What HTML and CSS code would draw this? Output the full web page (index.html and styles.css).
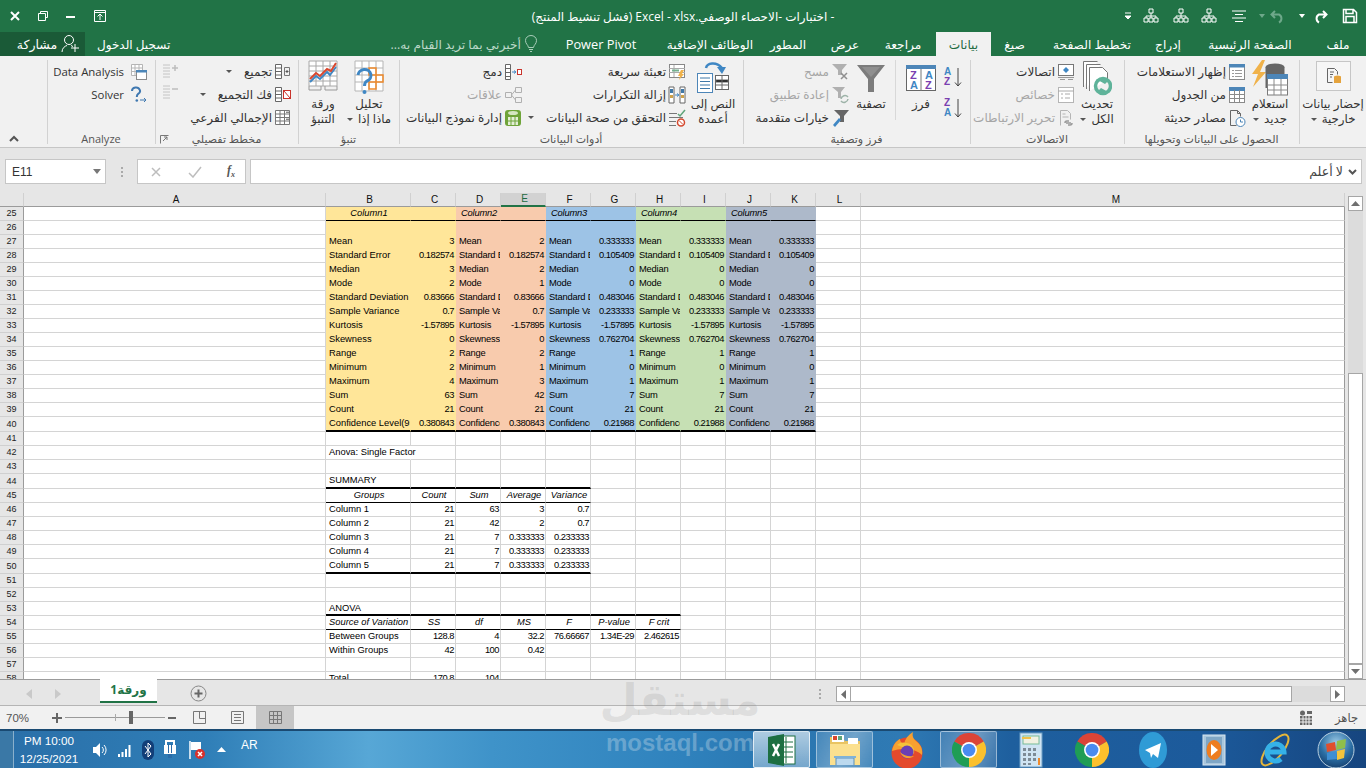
FILE: index.html
```html
<!DOCTYPE html>
<html lang="ar">
<head>
<meta charset="utf-8">
<title>Excel</title>
<link rel="stylesheet" href="styles.css">
</head>
<body>
<div class="app">

<header class="titlebar">
  <div class="winctl">
    <svg width="12" height="12" viewBox="0 0 12 12"><path d="M2 2l8 8M10 2l-8 8" stroke="#fff" stroke-width="2"/></svg>
    <svg width="12" height="12" viewBox="0 0 12 12"><path d="M3.500 3V1.500h7v6H9M1.500 3.500h7v7h-7z" stroke="#fff" fill="none"/></svg>
    <svg width="12" height="12" viewBox="0 0 12 12"><path d="M1 7h9" stroke="#fff" stroke-width="2"/></svg>
    <svg width="14" height="14" viewBox="0 0 14 14"><path d="M1.500 1.500h11v11h-11zM1 3.500h12M7 11V5M4.500 7.500L7 5l2.500 2.500" stroke="#fff" fill="none"/></svg>
  </div>
  <div class="doc-title">- اختبارات -الاحصاء الوصفي.Excel - xlsx (فشل تنشيط المنتج)</div>
  <div class="qat">
    <svg width="6" height="8" viewBox="0 0 6 8"><path d="M0 1h6M0 4l3 3 3-3z" stroke="#fff" fill="#fff"/></svg>
    <svg class="ml12" width="16" height="16" viewBox="0 0 16 16"><path d="M6 1h4v4H6zM1 10h4v4H1zM11 10h4v4h-4zM6 10h4v4H6zM8 5v3M3 10V8h10v2M8 8v2" stroke="#fff" fill="none"/></svg>
    <svg class="ml14" width="16" height="16" viewBox="0 0 16 16"><path d="M6 1h4v4H6zM1 10h4v4H1zM11 10h4v4h-4zM6 10h4v4H6zM8 5v3M3 10V8h10v2M8 8v2" stroke="#fff" fill="none"/></svg>
    <svg class="ml12" width="16" height="16" viewBox="0 0 16 16"><path d="M6 1h4v4H6zM1 10h4v4H1zM11 10h4v4h-4zM6 10h4v4H6zM8 5v3M3 10V8h10v2M8 8v2" stroke="#fff" fill="none"/></svg>
    <svg class="ml14" width="16" height="14" viewBox="0 0 16 14"><path d="M1 2h14M4 5.500h8M1 9h14M4 12.500h8" stroke="#fff"/></svg>
    <svg class="ml12" width="6" height="4" viewBox="0 0 6 4"><path d="M0 0h6L3 4z" fill="#6ea88a"/></svg>
    <svg class="ml5" width="16" height="16" viewBox="0 0 16 16"><path d="M5 3L1.500 6.500 5 10M2 6.500h7a4.500 4.500 0 0 1 0 8" stroke="#6ea88a" stroke-width="2" fill="none"/></svg>
    <svg class="ml13" width="6" height="4" viewBox="0 0 6 4"><path d="M0 0h6L3 4z" fill="#fff"/></svg>
    <svg class="ml7" width="16" height="16" viewBox="0 0 16 16"><path d="M11 3l3.500 3.500L11 10M14 6.500H7a4.500 4.500 0 0 0 0 8" stroke="#fff" stroke-width="2" fill="none"/></svg>
    <svg class="ml14" width="16" height="16" viewBox="0 0 16 16"><path d="M1.500 1.500h10l3 3v10h-13zM4 1.500v4h7v-4M4 14.500v-6h8v6" stroke="#fff" stroke-width="1.500" fill="none"/></svg>
  </div>
</header>

<nav class="tabs">
  <span class="tab t-file">ملف</span>
  <span class="tab t-home">الصفحة الرئيسية</span>
  <span class="tab t-ins">إدراج</span>
  <span class="tab t-page">تخطيط الصفحة</span>
  <span class="tab t-form">صيغ</span>
  <span class="tab t-data active">بيانات</span>
  <span class="tab t-rev">مراجعة</span>
  <span class="tab t-view">عرض</span>
  <span class="tab t-dev">المطور</span>
  <span class="tab t-add">الوظائف الإضافية</span>
  <span class="tab t-pp">Power Pivot</span>
  <span class="tellme">
    <svg width="14" height="18" viewBox="0 0 14 18"><path d="M4.500 12.500C4 9.500 1.500 9 1.500 5.500a5.500 5 0 0 1 11 0C12.500 9 10 9.500 9.500 12.500zM5 14.500h4M6 16.500h2" stroke="#a9cdb9" fill="none"/></svg>
    أخبرني بما تريد القيام به...
  </span>
  <span class="signin">تسجيل الدخول</span>
  <span class="share">
    <svg width="20" height="20" viewBox="0 0 20 20"><circle cx="9" cy="6" r="4.500" stroke="#fff" fill="none"/><path d="M2 18c0-4 3-6 5-6.500M11 11.500l2 1M15 10v8M11 14h8" stroke="#fff" fill="none"/></svg>
    مشاركة
  </span>
</nav>

<section class="ribbon">
  <div class="group g1">
    <div class="g-body">
      <div class="big">
        <div class="big-icon boxed">
          <svg width="18" height="20" viewBox="0 0 18 20"><path d="M3.500 2.500h7l3 3v3M3.500 2.500v14h5M6 6h4M6 8.500h3M6 11h2" stroke="#666" fill="none"/><ellipse cx="13.500" cy="11" rx="3.500" ry="1.500" fill="#e5a33d"/><rect x="10" y="11" width="7" height="6" fill="#e5a33d"/></svg>
        </div>
        <span>إحضار بيانات</span>
        <span>خارجية <i class="car"></i></span>
      </div>
    </div>
    <div class="g-label"></div>
  </div>

  <div class="group g2">
    <div class="g-body">
      <div class="big">
        <div class="big-icon">
          <svg width="38" height="37" viewBox="0 0 38 37"><path d="M11 0L1 14h6L2 27l13-15H9l5-12z" fill="#f0b24a"/><ellipse cx="24" cy="7" rx="9.500" ry="3.500" fill="#666"/><rect x="14.500" y="7" width="19" height="21" fill="#666"/><rect x="16.500" y="15" width="20" height="20" fill="#fff" stroke="#7a7a7a"/><rect x="16" y="14" width="21" height="5" fill="#4d86b8"/><path d="M23 19v16M30 19v16M17 25h20M17 30h20" stroke="#8a8a8a"/></svg>
        </div>
        <span>استعلام</span>
        <span>جديد <i class="car"></i></span>
      </div>
      <div class="list">
        <div class="item"><svg width="18" height="18" viewBox="0 0 18 18"><rect x="1.500" y="1.500" width="15" height="15" fill="#fff" stroke="#8a8a8a"/><rect x="1" y="1" width="16" height="3.500" fill="#4d86b8"/><path d="M4 7.500h2M4 10.500h2M4 13.500h2M7 7.500h7M7 10.500h7M7 13.500h7" stroke="#9a9a9a"/></svg>إظهار الاستعلامات</div>
        <div class="item"><svg width="18" height="18" viewBox="0 0 18 18"><rect x="1.500" y="1.500" width="15" height="15" fill="#fff" stroke="#8a8a8a"/><rect x="1" y="1" width="16" height="4" fill="#4d86b8"/><path d="M1 8.500h16M1 12.500h16M6.500 4v13M11.500 4v13" stroke="#8a8a8a"/></svg>من الجدول</div>
        <div class="item"><svg width="18" height="18" viewBox="0 0 18 18"><path d="M2.500 16.500v-15h7l3 3v3M9.500 1.500v3h3M2.500 16.500h6" stroke="#666" fill="none"/><circle cx="12.500" cy="13" r="4.500" fill="#fff" stroke="#4d86b8"/><path d="M12.500 10.500V13h2.500" stroke="#4d86b8" fill="none"/></svg>مصادر حديثة</div>
      </div>
    </div>
    <div class="g-label">الحصول على البيانات وتحويلها</div>
  </div>

  <div class="group g3">
    <div class="g-body">
      <div class="big">
        <div class="big-icon">
          <svg width="30" height="37" viewBox="0 0 30 37"><path d="M1.500 27V1.500h14M4.500 29V4.500h14M7.500 31V7.500h13l5 5V20" stroke="#777" fill="#fff"/><circle cx="21" cy="26" r="7.500" fill="none" stroke="#5fb39a" stroke-width="3.500"/><path d="M14 19h6v-2l6 4-3 3zM28 33h-6v2l-6-4 3-3z" fill="#5fb39a"/></svg>
        </div>
        <span>تحديث</span>
        <span>الكل <i class="car"></i></span>
      </div>
      <div class="list">
        <div class="item"><svg width="18" height="18" viewBox="0 0 18 18"><rect x="1.500" y="1.500" width="15" height="11" fill="#fff" stroke="#777"/><path d="M9 4l3 3-3 3-3-3z" fill="#3f87c4"/><path d="M1 14.500h16M3 16.500h5M11 16.500h5" stroke="#999"/></svg>اتصالات</div>
        <div class="item off"><svg width="18" height="18" viewBox="0 0 18 18"><rect x="1.500" y="1.500" width="15" height="15" fill="#fff" stroke="#b5b5b5"/><path d="M1 5h16M4 8h2M4 12h2M8 8h5M8 12h5" stroke="#aaa"/></svg>خصائص</div>
        <div class="item off"><svg width="18" height="18" viewBox="0 0 18 18"><path d="M3.500 16.500v-15h7l3 3v6M5.500 5h3M5.500 8h6" stroke="#b5b5b5" fill="none"/><path d="M8 14a2 2 0 0 1 2-2h2M15 14a2 2 0 0 1-2 2h-2M9 14h5" stroke="#999" stroke-width="1.500" fill="none"/></svg>تحرير الارتباطات</div>
      </div>
    </div>
    <div class="g-label">الاتصالات</div>
  </div>

  <div class="group g4">
    <div class="g-body">
      <div class="sort-col">
        <svg width="20" height="22" viewBox="0 0 20 22"><text x="1" y="9" class="sv-a">A</text><text x="1" y="19" class="sv-z">Z</text><path d="M15 2v18M12 16.500l3 3.500 3-3.500" stroke="#444" fill="none"/></svg>
        <svg width="20" height="22" viewBox="0 0 20 22"><text x="1" y="9" class="sv-z">Z</text><text x="1" y="19" class="sv-a">A</text><path d="M15 2v18M12 16.500l3 3.500 3-3.500" stroke="#444" fill="none"/></svg>
      </div>
      <div class="big b-sort">
        <div class="big-icon">
          <svg width="30" height="26" viewBox="0 0 30 26"><rect x=".5" y=".5" width="29" height="25" fill="#fff" stroke="#666"/><rect width="30" height="4" fill="#4d86b8"/><path d="M15 4v22" stroke="#777"/><text x="4" y="14" class="sv-bz">Z</text><text x="4" y="24" class="sv-ba">A</text><text x="19" y="14" class="sv-ba">A</text><text x="19" y="24" class="sv-bz">Z</text></svg>
        </div>
        <span>فرز</span>
      </div>
      <div class="big b-filter">
        <div class="big-icon">
          <svg width="28" height="27" viewBox="0 0 28 27"><path d="M0 0h28L17 14v13h-6V14z" fill="#7c7c7c"/><path d="M5 2h18l-9 10z" fill="#8f8f8f"/></svg>
        </div>
        <span>تصفية</span>
      </div>
      <div class="list">
        <div class="item off"><svg width="18" height="18" viewBox="0 0 18 18"><path d="M1 1h15l-5 6v5H7V7z" fill="#b0b0b0"/><path d="M10 10l6 6M16 10l-6 6" stroke="#8f8f8f" stroke-width="1.500"/></svg>مسح</div>
        <div class="item off"><svg width="18" height="18" viewBox="0 0 18 18"><path d="M1 1h13l-4 5v6H7V6z" fill="#b0b0b0"/><path d="M10 13a4 4 0 0 1 7-2M17 13a4 4 0 0 1-7 2" stroke="#9db3a8" stroke-width="1.500" fill="none"/></svg>إعادة تطبيق</div>
        <div class="item"><svg width="18" height="18" viewBox="0 0 18 18"><path d="M3 1h15l-5 6v6h-4V7z" fill="#666"/><path d="M2 16l6-7 2 2-6 7z" fill="#3f87c4"/></svg>خيارات متقدمة</div>
      </div>
    </div>
    <div class="g-label">فرز وتصفية</div>
  </div>

  <div class="group g5">
    <div class="g-body">
      <div class="big">
        <div class="big-icon">
          <svg width="34" height="34" viewBox="0 0 34 34"><path d="M10 8c1-5 10-7 16 0" stroke="#3f87c4" stroke-width="2.500" fill="none"/><path d="M21 7h9l-4 7z" fill="#3f87c4"/><rect x="1.500" y="13.500" width="15" height="19" fill="#fff" stroke="#4d86b8"/><path d="M4 18h10M4 21.500h10M4 25h10M4 28.500h10" stroke="#3f78a8"/><rect x="19.500" y="15.500" width="13" height="14" fill="#fff" stroke="#666"/><path d="M20 20h12v2H20zM20 25h12" stroke="#666"/><path d="M26 16v13" stroke="#666"/></svg>
        </div>
        <span>النص إلى</span>
        <span>أعمدة</span>
      </div>
      <div class="list l-fixed">
        <div class="item"><svg width="18" height="18" viewBox="0 0 18 18"><rect x="1.500" y="1.500" width="15" height="13" fill="#fff" stroke="#888"/><path d="M1 5.500h16M1 9.500h16M6 2v12" stroke="#aaa"/><path d="M4 7.500h7" stroke="#74b08f" stroke-width="2"/><path d="M13 7l-3 6h2l-1 4 5-6h-2l2-4z" fill="#f0b24a"/></svg>تعبئة سريعة</div>
        <div class="item"><svg width="18" height="18" viewBox="0 0 18 18"><path d="M1 1h5v16H1zM12 1h5v16h-5z" fill="#fff" stroke="#666"/><path d="M2 3h3v4H2zM13 3h3v4h-3z" fill="#3f78a8"/><path d="M2 9h3v3H2zM13 9h3v3h-3z" fill="#cfa24a"/><path d="M7 9h3M9 7.500L11 9l-2 1.500" stroke="#3f87c4" fill="none"/></svg>إزالة التكرارات</div>
        <div class="item"><svg width="18" height="18" viewBox="0 0 18 18"><path d="M1 4.500h8M1 8.500h14M1 12.500h7M1 16.500h7" stroke="#777"/><path d="M10 5l2 2 5-6" stroke="#5fa57a" stroke-width="1.500" fill="none"/><circle cx="13" cy="13.500" r="3.500" fill="#fff" stroke="#d4492f" stroke-width="1.500"/><path d="M11 11.500l4 4" stroke="#d4492f"/></svg>التحقق من صحة البيانات <i class="car m10"></i></div>
      </div>
      <div class="list">
        <div class="item"><svg width="18" height="18" viewBox="0 0 18 18"><path d="M1.500 1.500h5v15h-5zM1.500 5.500h5M1.500 9.500h5M1.500 13.500h5" stroke="#666" fill="#fff"/><path d="M8 9h3" stroke="#3f87c4"/><path d="M10 7.500L12 9l-2 1.500" fill="none" stroke="#3f87c4"/><rect x="13.500" y="6.500" width="4" height="5" fill="#fff" stroke="#c9342c"/></svg>دمج</div>
        <div class="item off"><svg width="18" height="18" viewBox="0 0 18 18"><path d="M1.500 6.500h6v5h-6zM11.500 1.500h6v5h-6zM11.500 11.500h6v5h-6zM7.500 9l4-5M7.500 9l4 5" stroke="#b0b0b0" fill="none"/></svg>علاقات</div>
        <div class="item"><svg width="18" height="18" viewBox="0 0 18 18"><rect x="1" y="1" width="16" height="16" rx="3" fill="#6fa43a"/><ellipse cx="9" cy="4" rx="5" ry="2" fill="#d5e6c2"/><path d="M4 8h10v8H4z" fill="#e3efd6"/><path d="M7 8v8M11 8v8M4 12h10" stroke="#6fa43a"/></svg>إدارة نموذج البيانات</div>
      </div>
    </div>
    <div class="g-label">أدوات البيانات</div>
  </div>

  <div class="group g6">
    <div class="g-body">
      <div class="big b-46">
        <div class="big-icon">
          <svg width="30" height="36" viewBox="0 0 30 36"><path d="M1 1h28v30H1zM1 8h28M1 15h28M1 22h28M8 1v30M15 1v30M22 1v30" fill="#fff" stroke="#b5b5b5"/><path d="M15 8h7v7h-7zM22 15h7v7h-7zM15 22h7v7h-7z" fill="none" stroke="#ee8a2c" stroke-width="1.500"/><path d="M4 15a6.500 6 0 1 1 9 6c-2 1-2.500 2-2.500 5" stroke="#3f87c4" stroke-width="3" fill="none"/><circle cx="10.500" cy="32" r="2" fill="#3f87c4"/></svg>
        </div>
        <span>تحليل</span>
        <span>ماذا إذا <i class="car"></i></span>
      </div>
      <div class="big b-46">
        <div class="big-icon">
          <svg width="30" height="33" viewBox="0 0 30 33"><path d="M1 1h28v25H1zM1 6h28M1 11h28M1 16h28M1 21h28M8 1v25M15 1v25M22 1v25" fill="#fff" stroke="#a8a8a8"/><path d="M2 22l6-6 4 3 7-7 3 3 6-8" stroke="#3f87c4" stroke-width="2" fill="none"/><path d="M2 19l6-6 4 3 7-7 4 2 5-8" stroke="#d9472f" stroke-width="2" fill="none"/><path d="M1 26v4h12v-4M17 26v4h12v-4" stroke="#999" fill="none"/></svg>
        </div>
        <span>ورقة</span>
        <span>التنبؤ</span>
      </div>
    </div>
    <div class="g-label">تنبؤ</div>
  </div>

  <div class="group g7">
    <div class="g-body between">
      <div class="list">
        <div class="item"><svg width="17" height="17" viewBox="0 0 17 17"><path d="M1.500 1.500h6v14h-6zM1.500 5h6M1.500 8.500h6M1.500 12h6" stroke="#666" fill="#fff"/><path d="M10.500 4.500h5v8h-5z" fill="none" stroke="#777"/><path d="M11.500 8.500h3M13 7v3" stroke="#555"/></svg>تجميع <i class="car m10"></i></div>
        <div class="item"><svg width="17" height="17" viewBox="0 0 17 17"><path d="M1.500 1.500h6v14h-6zM1.500 5h6M1.500 8.500h6M1.500 12h6" stroke="#666" fill="#fff"/><rect x="9.500" y="4.500" width="7" height="8" fill="#fff" stroke="#c9342c"/><path d="M10 5l6 7" stroke="#c9342c"/></svg>فك التجميع <i class="car m10"></i></div>
        <div class="item"><svg width="17" height="17" viewBox="0 0 17 17"><path d="M1.500 1.500h14v14h-14zM1.500 5h14M1.500 8.500h14M1.500 12h14M6 1.500v14M10.500 1.500v14" stroke="#777" fill="#fff"/><path d="M12 3.200h3M12 10.200h3" stroke="#555"/></svg>الإجمالي الفرعي</div>
      </div>
      <div class="outline-gray">
        <svg width="18" height="16" viewBox="0 0 18 16"><path d="M1 2h7M1 5h7M1 8h7M1 11h7M1 14h7" stroke="#c4c4c4"/><path d="M10 5h6M13 2v6" stroke="#bdbdbd" stroke-width="1.500"/></svg>
        <svg width="18" height="16" viewBox="0 0 18 16"><path d="M1 2h7M1 5h7M1 8h7M1 11h7M1 14h7" stroke="#c4c4c4"/><path d="M10 5h6" stroke="#bdbdbd" stroke-width="1.500"/></svg>
      </div>
    </div>
    <div class="g-label">مخطط تفصيلي
      <svg class="launcher" width="9" height="9" viewBox="0 0 9 9"><path d="M.5 8.500v-8h8M3 6l4-4M4 2h3v3" stroke="#777" fill="none"/></svg>
    </div>
  </div>

  <div class="group g8">
    <div class="g-body">
      <div class="list">
        <div class="item gap6"><svg width="17" height="17" viewBox="0 0 17 17"><path d="M1.500 1.500h11v11h-11zM1.500 5h11M1.500 8.500h11M5 1.500v11M9 1.500v11" stroke="#b5b5b5" fill="#fff"/><rect x="6.500" y="7.500" width="10" height="9" fill="#fff" stroke="#8a8a8a"/><rect x="6" y="7" width="11" height="2.500" fill="#4d86b8"/></svg>Data Analysis</div>
        <div class="item gap6"><svg width="17" height="17" viewBox="0 0 17 17"><path d="M2 5a4 3.500 0 1 1 6 3c-1 .8-1.200 1.500-1.200 3" stroke="#3f78b0" stroke-width="2" fill="none"/><circle cx="6.800" cy="14.500" r="1.300" fill="#3f78b0"/><path d="M10 14h6M14 12l2 2-2 2" stroke="#3f78b0" fill="none"/></svg>Solver</div>
      </div>
    </div>
    <div class="g-label">Analyze</div>
  </div>

  <div class="group g9">
    <div class="g-body"></div>
    <div class="g-label"><svg class="collapse" width="10" height="7" viewBox="0 0 10 7"><path d="M1 6l4-4 4 4" stroke="#555" stroke-width="2" fill="none"/></svg></div>
  </div>
</section>

<section class="formula">
  <div class="namebox">E11 <svg width="8" height="5" viewBox="0 0 8 5"><path d="M0 0h8L4 5z" fill="#777"/></svg></div>
  <div class="fdots"><i></i><i></i><i></i></div>
  <div class="fbtns">
    <svg width="12" height="12" viewBox="0 0 12 12"><path d="M2 2l8 8M10 2l-8 8" stroke="#bdbdbd" stroke-width="1.500"/></svg>
    <svg width="14" height="12" viewBox="0 0 14 12"><path d="M1 7l4 4 8-10" stroke="#bdbdbd" stroke-width="1.500" fill="none"/></svg>
    <span class="fx">f<sub>x</sub></span>
  </div>
  <div class="finput">
    <svg width="9" height="6" viewBox="0 0 9 6"><path d="M1 1l3.500 3.500L8 1" stroke="#555" stroke-width="2" fill="none"/></svg>
    <span>لا أعلم</span>
  </div>
</section>

<section class="sheet">
  <div class="grid-wrap">
    <table class="cells">
      <colgroup><col class="c-rh"><col class="c-a"><col class="c-b"><col class="c-n"><col class="c-n"><col class="c-n"><col class="c-n"><col class="c-n"><col class="c-n"><col class="c-n"><col class="c-n"><col class="c-n"><col class="c-n"><col class="c-m"></colgroup>
      <thead><tr><th></th><th>A</th><th>B</th><th>C</th><th>D</th><th class="sel">E</th><th>F</th><th>G</th><th>H</th><th>I</th><th>J</th><th>K</th><th>L</th><th class="h-m">M</th></tr></thead>
      <tbody>
<tr><th>25</th><td></td><td class="y tn it">Column1</td><td class="y tn"></td><td class="o tn it">Column2</td><td class="o tn"></td><td class="b tn it">Column3</td><td class="b tn"></td><td class="g tn it">Column4</td><td class="g tn"></td><td class="s tn it">Column5</td><td class="s tn"></td><td></td><td></td></tr>
<tr><th>26</th><td></td><td class="y"></td><td class="y"></td><td class="o"></td><td class="o"></td><td class="b"></td><td class="b"></td><td class="g"></td><td class="g"></td><td class="s"></td><td class="s"></td><td></td><td></td></tr>
<tr><th>27</th><td></td><td class="y">Mean</td><td class="y n">3</td><td class="o">Mean</td><td class="o n">2</td><td class="b">Mean</td><td class="b n">0.333333</td><td class="g">Mean</td><td class="g n">0.333333</td><td class="s">Mean</td><td class="s n">0.333333</td><td></td><td></td></tr>
<tr><th>28</th><td></td><td class="y">Standard Error</td><td class="y n">0.182574</td><td class="o">Standard Error</td><td class="o n">0.182574</td><td class="b">Standard Error</td><td class="b n">0.105409</td><td class="g">Standard Error</td><td class="g n">0.105409</td><td class="s">Standard Error</td><td class="s n">0.105409</td><td></td><td></td></tr>
<tr><th>29</th><td></td><td class="y">Median</td><td class="y n">3</td><td class="o">Median</td><td class="o n">2</td><td class="b">Median</td><td class="b n">0</td><td class="g">Median</td><td class="g n">0</td><td class="s">Median</td><td class="s n">0</td><td></td><td></td></tr>
<tr><th>30</th><td></td><td class="y">Mode</td><td class="y n">2</td><td class="o">Mode</td><td class="o n">1</td><td class="b">Mode</td><td class="b n">0</td><td class="g">Mode</td><td class="g n">0</td><td class="s">Mode</td><td class="s n">0</td><td></td><td></td></tr>
<tr><th>31</th><td></td><td class="y">Standard Deviation</td><td class="y n">0.83666</td><td class="o">Standard Deviation</td><td class="o n">0.83666</td><td class="b">Standard Deviation</td><td class="b n">0.483046</td><td class="g">Standard Deviation</td><td class="g n">0.483046</td><td class="s">Standard Deviation</td><td class="s n">0.483046</td><td></td><td></td></tr>
<tr><th>32</th><td></td><td class="y">Sample Variance</td><td class="y n">0.7</td><td class="o">Sample Variance</td><td class="o n">0.7</td><td class="b">Sample Variance</td><td class="b n">0.233333</td><td class="g">Sample Variance</td><td class="g n">0.233333</td><td class="s">Sample Variance</td><td class="s n">0.233333</td><td></td><td></td></tr>
<tr><th>33</th><td></td><td class="y">Kurtosis</td><td class="y n">-1.57895</td><td class="o">Kurtosis</td><td class="o n">-1.57895</td><td class="b">Kurtosis</td><td class="b n">-1.57895</td><td class="g">Kurtosis</td><td class="g n">-1.57895</td><td class="s">Kurtosis</td><td class="s n">-1.57895</td><td></td><td></td></tr>
<tr><th>34</th><td></td><td class="y">Skewness</td><td class="y n">0</td><td class="o">Skewness</td><td class="o n">0</td><td class="b">Skewness</td><td class="b n">0.762704</td><td class="g">Skewness</td><td class="g n">0.762704</td><td class="s">Skewness</td><td class="s n">0.762704</td><td></td><td></td></tr>
<tr><th>35</th><td></td><td class="y">Range</td><td class="y n">2</td><td class="o">Range</td><td class="o n">2</td><td class="b">Range</td><td class="b n">1</td><td class="g">Range</td><td class="g n">1</td><td class="s">Range</td><td class="s n">1</td><td></td><td></td></tr>
<tr><th>36</th><td></td><td class="y">Minimum</td><td class="y n">2</td><td class="o">Minimum</td><td class="o n">1</td><td class="b">Minimum</td><td class="b n">0</td><td class="g">Minimum</td><td class="g n">0</td><td class="s">Minimum</td><td class="s n">0</td><td></td><td></td></tr>
<tr><th>37</th><td></td><td class="y">Maximum</td><td class="y n">4</td><td class="o">Maximum</td><td class="o n">3</td><td class="b">Maximum</td><td class="b n">1</td><td class="g">Maximum</td><td class="g n">1</td><td class="s">Maximum</td><td class="s n">1</td><td></td><td></td></tr>
<tr><th>38</th><td></td><td class="y">Sum</td><td class="y n">63</td><td class="o">Sum</td><td class="o n">42</td><td class="b">Sum</td><td class="b n">7</td><td class="g">Sum</td><td class="g n">7</td><td class="s">Sum</td><td class="s n">7</td><td></td><td></td></tr>
<tr><th>39</th><td></td><td class="y">Count</td><td class="y n">21</td><td class="o">Count</td><td class="o n">21</td><td class="b">Count</td><td class="b n">21</td><td class="g">Count</td><td class="g n">21</td><td class="s">Count</td><td class="s n">21</td><td></td><td></td></tr>
<tr class="tall"><th>40</th><td></td><td class="y tb">Confidence Level(95.0%)</td><td class="y n tb">0.380843</td><td class="o tb">Confidence Level(95.0%)</td><td class="o n tb">0.380843</td><td class="b tb">Confidence Level(95.0%)</td><td class="b n tb">0.21988</td><td class="g tb">Confidence Level(95.0%)</td><td class="g n tb">0.21988</td><td class="s tb">Confidence Level(95.0%)</td><td class="s n tb">0.21988</td><td></td><td></td></tr>
<tr><th>41</th><td></td><td></td><td></td><td></td><td></td><td></td><td></td><td></td><td></td><td></td><td></td><td></td><td></td></tr>
<tr><th>42</th><td></td><td class="spill">Anova: Single Factor</td><td></td><td></td><td></td><td></td><td></td><td></td><td></td><td></td><td></td><td></td><td></td></tr>
<tr><th>43</th><td></td><td></td><td></td><td></td><td></td><td></td><td></td><td></td><td></td><td></td><td></td><td></td><td></td></tr>
<tr><th>44</th><td></td><td class="tb">SUMMARY</td><td class="tb"></td><td class="tb"></td><td class="tb"></td><td class="tb"></td><td></td><td></td><td></td><td></td><td></td><td></td><td></td></tr>
<tr><th>45</th><td></td><td class="tn it">Groups</td><td class="tn it">Count</td><td class="tn it">Sum</td><td class="tn it">Average</td><td class="tn it">Variance</td><td></td><td></td><td></td><td></td><td></td><td></td><td></td></tr>
<tr><th>46</th><td></td><td>Column 1</td><td class="n">21</td><td class="n">63</td><td class="n">3</td><td class="n">0.7</td><td></td><td></td><td></td><td></td><td></td><td></td><td></td></tr>
<tr><th>47</th><td></td><td>Column 2</td><td class="n">21</td><td class="n">42</td><td class="n">2</td><td class="n">0.7</td><td></td><td></td><td></td><td></td><td></td><td></td><td></td></tr>
<tr><th>48</th><td></td><td>Column 3</td><td class="n">21</td><td class="n">7</td><td class="n">0.333333</td><td class="n">0.233333</td><td></td><td></td><td></td><td></td><td></td><td></td><td></td></tr>
<tr><th>49</th><td></td><td>Column 4</td><td class="n">21</td><td class="n">7</td><td class="n">0.333333</td><td class="n">0.233333</td><td></td><td></td><td></td><td></td><td></td><td></td><td></td></tr>
<tr class="tall"><th>50</th><td></td><td class="tb">Column 5</td><td class="n tb">21</td><td class="n tb">7</td><td class="n tb">0.333333</td><td class="n tb">0.233333</td><td></td><td></td><td></td><td></td><td></td><td></td><td></td></tr>
<tr><th>51</th><td></td><td></td><td></td><td></td><td></td><td></td><td></td><td></td><td></td><td></td><td></td><td></td><td></td></tr>
<tr><th>52</th><td></td><td></td><td></td><td></td><td></td><td></td><td></td><td></td><td></td><td></td><td></td><td></td><td></td></tr>
<tr class="snug"><th>53</th><td></td><td class="tb">ANOVA</td><td class="tb"></td><td class="tb"></td><td class="tb"></td><td class="tb"></td><td class="tb"></td><td class="tb"></td><td></td><td></td><td></td><td></td><td></td></tr>
<tr><th>54</th><td></td><td class="tn il">Source of Variation</td><td class="tn it">SS</td><td class="tn it">df</td><td class="tn it">MS</td><td class="tn it">F</td><td class="tn it">P-value</td><td class="tn it">F crit</td><td></td><td></td><td></td><td></td><td></td></tr>
<tr><th>55</th><td></td><td>Between Groups</td><td class="n">128.8</td><td class="n">4</td><td class="n">32.2</td><td class="n">76.66667</td><td class="n">1.34E-29</td><td class="n">2.462615</td><td></td><td></td><td></td><td></td><td></td></tr>
<tr><th>56</th><td></td><td>Within Groups</td><td class="n">42</td><td class="n">100</td><td class="n">0.42</td><td></td><td></td><td></td><td></td><td></td><td></td><td></td><td></td></tr>
<tr><th>57</th><td></td><td></td><td></td><td></td><td></td><td></td><td></td><td></td><td></td><td></td><td></td><td></td><td></td></tr>
<tr><th>58</th><td></td><td>Total</td><td class="n">170.8</td><td class="n">104</td><td></td><td></td><td></td><td></td><td></td><td></td><td></td><td></td><td></td></tr>
      </tbody>
    </table>
  </div>
  <div class="vscroll">
    <div class="sb-btn"><svg width="9" height="5" viewBox="0 0 9 5"><path d="M0 5h9L4.500 0z" fill="#6f6f6f"/></svg></div>
    <div class="sb-track"></div>
    <div class="sb-thumb"></div>
    <div class="sb-btn"><svg width="9" height="5" viewBox="0 0 9 5"><path d="M0 0h9L4.500 5z" fill="#6f6f6f"/></svg></div>
  </div>
</section>

<section class="sheetbar">
  <div class="snav">
    <svg width="6" height="10" viewBox="0 0 6 10"><path d="M6 0v10L0 5z" fill="#c9c9c9"/></svg>
    <svg width="6" height="10" viewBox="0 0 6 10"><path d="M0 0v10l6-5z" fill="#c9c9c9"/></svg>
  </div>
  <div class="stab">ورقة1</div>
  <svg class="splus" width="17" height="17" viewBox="0 0 17 17"><circle cx="8.500" cy="8.500" r="7.500" fill="none" stroke="#888"/><path d="M4.500 8.500h8M8.500 4.500v8" stroke="#666" stroke-width="2"/></svg>
  <div class="hdots"><i></i><i></i><i></i></div>
  <div class="hscroll">
    <div class="hb"><svg width="5" height="9" viewBox="0 0 5 9"><path d="M5 0v9L0 4.500z" fill="#6f6f6f"/></svg></div>
    <div class="hthumb"></div>
    <div class="htrack"></div>
    <div class="hb"><svg width="5" height="9" viewBox="0 0 5 9"><path d="M0 0v9l5-4.500z" fill="#6f6f6f"/></svg></div>
  </div>
</section>

<footer class="status">
  <span class="zoomv">70%</span>
  <div class="slider">
    <svg width="10" height="10" viewBox="0 0 10 10"><path d="M0 5h10M5 0v10" stroke="#666" stroke-width="2"/></svg>
    <div class="strack"><i class="tick"></i><i class="knob"></i></div>
    <svg width="8" height="10" viewBox="0 0 8 10"><path d="M0 5h8" stroke="#666" stroke-width="2"/></svg>
  </div>
  <div class="views">
    <div class="v"><svg width="15" height="15" viewBox="0 0 15 15"><path d="M1.500 1.500h12v12h-12zM7.500 1.500v7h6" stroke="#777" fill="none"/></svg></div>
    <div class="v"><svg width="15" height="15" viewBox="0 0 15 15"><path d="M1.500 1.500h12v12h-12zM4 4.500h7M4 7.500h7M4 10.500h7" stroke="#777" fill="none"/></svg></div>
    <div class="v on"><svg width="15" height="15" viewBox="0 0 15 15"><path d="M1.500 1.500h12v12h-12zM1.500 5.500h12M1.500 9.500h12M5.500 1.500v12M9.500 1.500v12" stroke="#777" fill="none"/></svg></div>
  </div>
  <div class="status-r">
    <svg width="14" height="16" viewBox="0 0 14 16"><rect x="1" y="6" width="12" height="9" fill="#666"/><path d="M1 9h12M1 12h12M4 6v9M7 6v9M10 6v9" stroke="#f1f1f1"/><circle cx="3.500" cy="3" r="2.500" fill="#666"/><rect x="8" y="1" width="5" height="3" fill="#666"/></svg>
    <span>جاهز</span>
  </div>
</footer>

<footer class="taskbar">
  <div class="show-desk"></div>
  <div class="clock"><span>PM 10:00</span><span>12/25/2021</span></div>
  <div class="tray">
    <svg width="16" height="16" viewBox="0 0 16 16"><path d="M1 5h3l4-4v14l-4-4H1z" fill="#fff"/><path d="M10 5a4 4 0 0 1 0 6M12 3a7 7 0 0 1 0 10" stroke="#fff" fill="none"/></svg>
    <svg width="16" height="15" viewBox="0 0 16 15"><path d="M1 12h2v3H1zM4.500 10h2v5h-2zM8 7h2v8H8zM11.500 3h2v12h-2z" fill="#fff"/></svg>
    <svg width="12" height="20" viewBox="0 0 12 20"><rect width="12" height="20" rx="6" fill="#123e78"/><path d="M3 6l6 8-3 3V3l3 3-6 8" stroke="#fff" fill="none"/></svg>
    <svg width="14" height="19" viewBox="0 0 14 19"><path d="M3 6V1h8v5" stroke="#fff" stroke-width="2" fill="none"/><path d="M1 5h12v9H1z" fill="#fff"/><path d="M5 14h4v4H5zM5 4h1v9H5zM8 4h1v9H8z" fill="#2a6ca8"/></svg>
    <svg class="ml3" width="16" height="20" viewBox="0 0 16 20"><path d="M1 1v18" stroke="#fff" stroke-width="1.500"/><path d="M2 2h10v8H2z" fill="#fff"/><circle cx="11" cy="14" r="5" fill="#d8302c"/><path d="M9 12l4 4M13 12l-4 4" stroke="#fff" stroke-width="1.500"/></svg>
    <svg class="ml3" width="9" height="5" viewBox="0 0 9 5"><path d="M0 5h9L4.500 0z" fill="#fff"/></svg>
  </div>
  <span class="lang">AR</span>
  <div class="task-apps">
    <div class="app-btn active"><svg width="30" height="34" viewBox="0 0 30 34"><rect x="10" y="3" width="18" height="28" fill="#fff" stroke="#1d6f42"/><path d="M12 9h14M12 14h14M12 19h14M12 24h14M19 4v26" stroke="#1d6f42"/><path d="M1 4l16-3v32L1 30z" fill="#1d6f42"/><path d="M6 11l6 12M12 11L6 23" stroke="#fff" stroke-width="2.500"/></svg></div>
    <div class="app-btn semi"><svg width="32" height="34" viewBox="0 0 32 34"><path d="M1 4h12l3 4h15v24H1z" fill="#e9c463"/><rect x="3" y="2" width="12" height="7" fill="#fff"/><rect x="4" y="3" width="4" height="4" fill="#d9472f"/><rect x="9" y="3" width="4" height="4" fill="#5fa57a"/><rect x="19" y="5" width="10" height="6" fill="#fff"/><path d="M1 11h30v21H1z" fill="#fbe08f"/><path d="M7 32v-7h18v7" fill="#bcd9ee" stroke="#5a91bd"/><path d="M5 24h22" stroke="#7fb2d8" stroke-width="2"/></svg></div>
    <div class="app-btn"><svg width="34" height="38" viewBox="0 0 34 38"><circle cx="17" cy="22" r="15.500" fill="#e44a2c"/><path d="M2 20c1-6 4-10 8-12 0 3 2 4 4 5 1-5 4-9 9-12-1 4 0 6 3 9 4 3 7 7 6 14-5-6-20-8-30-4z" fill="#f7a031"/><path d="M7 14c3-3 7-3 10-2 5 1 8 5 7 11-5-5-12-7-17-9z" fill="#f5c23a"/><circle cx="17" cy="21" r="6.500" fill="#6b3fb5"/><path d="M10 21c2 6 9 8 14 4-5 1-10 0-14-4z" fill="#f7a031"/></svg></div>
    <div class="app-btn semi"><svg width="34" height="34" viewBox="0 0 32 32"><path d="M2.140 8A16 16 0 0 1 29.860 8L16 16z" fill="#db4437"/><path d="M29.860 8A16 16 0 0 1 16 32L16 16z" fill="#fbc02d"/><path d="M16 32A16 16 0 0 1 2.140 8L16 16z" fill="#1f9d55"/><circle cx="16" cy="16" r="7.500" fill="#fff"/><circle cx="16" cy="16" r="6" fill="#4a8bf0"/></svg></div>
    <div class="app-btn"><svg width="24" height="36" viewBox="0 0 24 36"><rect x="1" y="1" width="22" height="34" fill="#cfe4f3" stroke="#6e9fc4"/><rect x="4" y="4" width="16" height="8" fill="#f1f1e2" stroke="#7b9"/><path d="M3 5h9v2H3z" fill="#f0c14b"/><path d="M4 16h3v3H4zM9 16h3v3H9zM14 16h3v3h-3zM4 21h3v3H4zM9 21h3v3H9zM14 21h3v3h-3zM4 26h3v3H4zM9 26h3v3H9zM14 26h3v3h-3zM4 31h3v2H4zM9 31h3v2H9z" fill="#7d8b96"/><path d="M19 26h2v7h-2z" fill="#ee8a2c"/></svg></div>
    <div class="app-btn"><svg width="34" height="34" viewBox="0 0 32 32"><path d="M2.140 8A16 16 0 0 1 29.860 8L16 16z" fill="#db4437"/><path d="M29.860 8A16 16 0 0 1 16 32L16 16z" fill="#fbc02d"/><path d="M16 32A16 16 0 0 1 2.140 8L16 16z" fill="#1f9d55"/><circle cx="16" cy="16" r="7.500" fill="#fff"/><circle cx="16" cy="16" r="6" fill="#4a8bf0"/></svg></div>
    <div class="app-btn"><svg width="28" height="36" viewBox="0 0 28 36"><ellipse cx="14" cy="18" rx="14" ry="18" fill="#2f9bd6"/><path d="M6 18l16-7-3 15-5-4-2 4-1-5z" fill="#fff"/></svg></div>
    <div class="app-btn"><svg width="26" height="34" viewBox="0 0 26 34"><rect x="2" y="2" width="22" height="30" fill="#a9c6dc" stroke="#d7e5ef"/><rect x="5" y="4" width="16" height="26" fill="#7fa6c5"/><ellipse cx="13" cy="17" rx="7.500" ry="10" fill="#ee7d20"/><path d="M10 11l7 6-7 6z" fill="#fff"/></svg></div>
    <div class="app-btn"><svg width="32" height="36" viewBox="0 0 32 36"><ellipse cx="16" cy="18" rx="19" ry="7.500" transform="rotate(-50 16 18)" fill="none" stroke="#e4b53a" stroke-width="2"/><path d="M8 20h17a8.500 8.500 0 1 0-3 7" stroke="#35b1e8" stroke-width="5" fill="none"/></svg></div>
    <div class="app-btn orb"><svg width="38" height="38" viewBox="0 0 38 38"><defs><radialGradient id="orbg" cx=".5" cy=".3" r=".8"><stop offset="0" stop-color="#9ccbe6"/><stop offset=".55" stop-color="#2a6da3"/><stop offset="1" stop-color="#10325f"/></radialGradient></defs><circle cx="19" cy="19" r="18" fill="url(#orbg)" stroke="#b7cfe0"/><path d="M9 13l9-2 1 8-9 2z" fill="#e04f2d"/><path d="M20 10l9-2-1 9-9 2z" fill="#8fc04b"/><path d="M10 22l9-2 1 8-10 1z" fill="#3e8ed3"/><path d="M20 20l8-2-1 9-7 2z" fill="#f3c43c"/></svg></div>
  </div>
</footer>

<div class="watermark" aria-hidden="true"><b>مستقل</b><span>mostaql.com</span></div>
</div>
</body>
</html>
```
FILE: styles.css
```css
*{box-sizing:border-box}
html,body{margin:0;padding:0;height:768px;overflow:hidden}
body{font-family:"Open Sans","DejaVu Sans",sans-serif;font-size:11px;color:#333}
.app{width:1366px;height:768px;display:flex;flex-direction:column;position:relative;overflow:hidden;background:#e6e6e6}

.titlebar{height:32px;background:#217346;display:grid;grid-template-columns:1fr auto 1fr;align-items:center;color:#fff;flex:none}
.winctl{display:flex;align-items:center;gap:16px;padding-left:9px}
.doc-title{direction:rtl;font-size:12px;white-space:nowrap}
.qat{display:flex;align-items:center;justify-content:flex-end;padding-right:8px}
.ml3{margin-left:3px}.ml5{margin-left:5px}.ml7{margin-left:7px}.ml12{margin-left:12px}.ml13{margin-left:13px}.ml14{margin-left:14px}

.tabs{height:24px;flex:none;background:#217346;display:flex;direction:rtl;align-items:stretch;color:#fff;font-size:12.2px}
.tab{display:flex;align-items:center;justify-content:center;white-space:nowrap}
.t-file{width:56px}.t-home{width:120px}.t-ins{width:44px}.t-page{width:108px}.t-form{width:47px}.t-data{width:55px}.t-rev{width:66px}.t-view{width:50px}.t-dev{width:64px}.t-add{width:92px}.t-pp{width:126px;font-size:12.8px}
.tab.active{background:#f1f1f1;color:#1e6b41}
.tellme{width:160px;display:flex;align-items:center;gap:3px;color:#bcd8c8;white-space:nowrap;font-size:12.3px}
.signin{margin-right:auto;padding-left:12px;display:flex;align-items:center;white-space:nowrap;font-size:12px}
.share{width:85px;background:#1a5a37;display:flex;align-items:center;justify-content:center;gap:3px;font-size:12.5px;white-space:nowrap;padding-left:12px}

.ribbon{height:92px;flex:none;background:#f1f1f1;border-bottom:1px solid #c6c6c6;display:flex;direction:rtl;font-size:12px;color:#333}
.group{display:flex;flex-direction:column;position:relative;flex:none}
.group::after{content:"";position:absolute;left:0;top:4px;bottom:3px;width:1px;background:#d2d2d2}
.g1{width:67px}.g2{width:175px}.g3{width:154px}.g4{width:227px}.g5{width:344px}.g6{width:101px}.g7{width:143px}.g8{width:108px}.g9{flex:1}
.g9::after{display:none}
.g-body{height:75px;display:flex;align-items:flex-start}
.g-label{height:16px;line-height:16px;text-align:center;font-size:11px;color:#555;position:relative;white-space:nowrap}
.big{display:flex;flex-direction:column;align-items:center;padding-top:4px;flex:none;line-height:15px;white-space:nowrap;font-size:11.8px}
.big-icon{height:36px;display:flex;justify-content:center;align-items:flex-start}
.boxed svg{display:block}
.boxed{width:35px;height:30px;margin:1px 0 5px;background:#f6f6f6;border:1px solid #c6c6c6;align-items:center}
.g1 .big{width:66px}
.g2 .big{width:48px;margin-right:5px}
.g3 .big{width:44px;margin-right:5px}
.g5 .big{width:50px;margin-right:5px}
.b-46{width:46px}
.g6 .b-46:first-child{margin-right:7px}
.sort-col{width:22px;margin-right:6px;display:flex;flex-direction:column;align-items:center;gap:9px;padding-top:10px;flex:none}
.b-sort{width:42px;padding-top:9px}
.b-sort .big-icon{height:31px}
.b-filter{width:40px;margin-right:9px;padding-top:9px;position:relative}
.b-filter .big-icon{height:31px}
.b-filter::before{content:"";position:absolute;right:-5px;top:4px;height:60px;width:1px;background:#d8d8d8}
.g4 .list{margin-right:2px}
.list{display:flex;flex-direction:column;padding-top:4px;flex:none}
.l-fixed{width:166px}
.g5 .list{padding-right:2px}
.g5 .list + .list{padding-right:0}
.g8 .list{margin-right:8px}
.g8 .item{font-size:11.4px}
.item{height:23px;display:flex;align-items:center;gap:2px;white-space:nowrap}
.gap6{gap:6px}
.item.off{color:#a6a6a6}
.car{display:inline-block;width:0;height:0;border-left:3px solid transparent;border-right:3px solid transparent;border-top:3px solid #555;vertical-align:middle;margin-right:2px}
.car.m10{margin-right:10px}
.between{justify-content:space-between;padding:0 7px}
.outline-gray{display:flex;flex-direction:column;gap:5px;padding-top:7px}
.launcher{position:absolute;left:5px;top:4px}
.collapse{position:absolute;left:9px;top:4px}
.g7 .item svg{flex:none}
svg text{direction:ltr}
.sv-a,.sv-z,.sv-ba,.sv-bz{font:700 10px "Liberation Sans",sans-serif}
.sv-a,.sv-ba{fill:#3f87c4}.sv-z,.sv-bz{fill:#7a3fb0}
.sv-ba,.sv-bz{font-size:11px}

.formula{height:45px;flex:none;background:#e6e6e6;display:flex;align-items:flex-start;padding:11px 4px 0 5px}
.namebox{width:101px;height:25px;background:#fff;border:1px solid #c6c6c6;font:12px "Liberation Sans",sans-serif;color:#333;display:flex;align-items:center;justify-content:space-between;padding:0 4px 0 6px}
.fdots,.hdots{display:flex;flex-direction:column;gap:2px;align-items:center;justify-content:center}
.fdots{width:31px;height:25px}
.fdots i,.hdots i{width:2px;height:2px;background:#aaa;display:block}
.fbtns{width:109px;height:25px;background:#fff;border:1px solid #c6c6c6;display:flex;align-items:center;justify-content:space-between;padding:0 10px 0 12px}
.fx{font:italic 700 12px "Liberation Serif",serif;color:#555}
.fx sub{font-size:8px}
.finput{width:1112px;margin-left:4px;height:25px;background:#fff;border:1px solid #c6c6c6;display:flex;flex-direction:row-reverse;align-items:center;justify-content:flex-start;padding-right:4px;gap:5px;font-size:12.5px;color:#444}

.sheet{flex:1;min-height:0;display:flex;background:#e6e6e6}
.grid-wrap{width:1345px;height:486px;overflow:hidden;flex:none;background:#fff}
.cells{border-collapse:separate;border-spacing:0;table-layout:fixed;width:1345px;font:9.35px/13px "Liberation Sans",Arial,sans-serif;color:#000}
.c-rh{width:24px}.c-a{width:302px}.c-b{width:85px}.c-n{width:45px}.c-m{width:484px}
.cells thead th{height:13px;padding:0 0 0 3px;background:#e6e6e6;font-weight:400;font-size:10px;line-height:12px;text-align:center;border-bottom:1px solid #9b9b9b;border-right:1px solid #d0d0d0;color:#111}
.cells thead th.sel{background:#d2d2d2;border-bottom:2px solid #217346;color:#1e6b41}
.cells thead th.h-m{padding-left:27px}
.cells tbody th{background:#e6e6e6;font-weight:400;font-size:9px;text-align:center;padding:0;border-right:1px solid #9b9b9b;border-bottom:1px solid #d0d0d0;color:#222;height:14px;overflow:hidden}
.cells td{height:14px;padding:0 1px 0 3px;overflow:hidden;white-space:nowrap;border-right:1px solid #d4d4d4;border-bottom:1px solid #d4d4d4;vertical-align:middle}
.cells tr.tall td,.cells tr.tall th{height:15px}
.cells tr.snug td{line-height:12px}
.cells td:last-child{border-right:1px solid #9b9b9b}
.cells .y{background:#ffe699;border-color:#ffe699}
.cells .o{background:#f8cbad;border-color:#f8cbad;letter-spacing:-.2px}
.cells .b{background:#9dc3e6;border-color:#9dc3e6;letter-spacing:-.2px}
.cells .g{background:#c6e0b4;border-color:#c6e0b4;letter-spacing:-.2px}
.cells .s{background:#adb9ca;border-color:#adb9ca;letter-spacing:-.2px}
.cells td.n{text-align:right;letter-spacing:-.5px}
.cells td.it{font-style:italic;text-align:center}
.cells td.il{font-style:italic}
.cells td.tn{border-bottom:1px solid #000}
.cells td.tb{border-bottom:2px solid #000}
.cells td.spill{overflow:visible;border-right-color:transparent}

.vscroll{width:21px;display:flex;flex-direction:column;align-items:center;padding-top:3px}
.sb-btn{width:15px;height:15px;background:#fff;border:1px solid #a6a6a6;display:flex;align-items:center;justify-content:center;flex:none}
.sb-track{height:162px;width:15px;background:#dcdcdc;flex:none}
.sb-thumb{height:291px;width:15px;background:#fff;border:1px solid #a6a6a6;flex:none}

.sheetbar{height:27px;flex:none;background:#e6e6e6;border-top:1px solid #9b9b9b;border-bottom:1px solid #b5b5b5;display:flex;align-items:flex-start;position:relative}
.snav{width:100px;display:flex;gap:23px;padding:9px 0 0 26px}
.stab{width:57px;height:24px;margin-top:-1px;background:#fff;border-bottom:2px solid #217346;color:#217346;font-weight:700;font-size:12px;text-align:center;line-height:22px;direction:rtl}
.splus{margin:5px 0 0 33px}
.hdots{width:6px;height:16px;margin:6px 0 0 610px}
.hscroll{width:509px;height:16px;margin:6px 0 0 13px;display:flex}
.hb{width:15px;height:16px;background:#fff;border:1px solid #a6a6a6;display:flex;align-items:center;justify-content:center;flex:none}
.hthumb{width:441px;background:#fff;border:1px solid #a6a6a6;border-left:0}
.htrack{flex:1;background:#dcdcdc}

.status{height:23px;flex:none;background:#f1f1f1;display:flex;align-items:center;color:#555;position:relative}
.zoomv{width:52px;padding-left:6px;font:11.5px "Liberation Sans",sans-serif}
.slider{display:flex;align-items:center;gap:3px;width:130px}
.strack{width:100px;height:1px;background:#9a9a9a;position:relative}
.tick{position:absolute;left:50px;top:-3px;width:1px;height:7px;background:#aaa}
.knob{position:absolute;left:64px;top:-6px;width:4px;height:13px;background:#666}
.views{display:flex;align-items:center;height:23px;margin-left:-2px}
.v{width:38px;height:23px;display:flex;align-items:center;justify-content:center}
.v.on{background:#c6c6c6}
.status-r{margin-left:auto;display:flex;align-items:center;gap:22px;padding-right:8px;font-size:11.5px}

.taskbar{height:39px;flex:none;display:flex;align-items:center;color:#fff;background:linear-gradient(90deg,#2a6fa8 0,#2f7eb7 15%,#57a7d6 27%,#3f93c9 36%,#2f82bd 50%,#2a76b0 57%,#2f7ab4 66%,#1e5f9e 74%,#1c5a9b 88%,#16457f 100%);border-top:2px solid #1a4a72;position:relative}
.show-desk{width:14px;height:37px;background:#3a78a6;border-right:1px solid #8ab0cc;flex:none}
.clock{width:70px;display:flex;flex-direction:column;align-items:center;gap:4px;font:11.7px/14px "Liberation Sans",sans-serif;white-space:nowrap}
.tray{display:flex;align-items:center;gap:9px;margin-left:8px;width:149px}
.lang{font:12px "Liberation Sans",sans-serif;width:27px;margin:-10px 0 0 0}
.task-apps{display:flex;margin-left:auto;width:616px;height:37px}
.app-btn{flex:1;display:flex;align-items:center;justify-content:center;margin:0 3px;min-width:0}
.app-btn svg{flex:none}
.app-btn.active{background:linear-gradient(180deg,rgba(255,255,255,.62),rgba(255,255,255,.35));border:1px solid rgba(255,255,255,.7);border-radius:2px}
.app-btn.semi{background:linear-gradient(115deg,rgba(255,255,255,.12),rgba(255,255,255,.32) 55%,rgba(255,255,255,.12));border:1px solid rgba(255,255,255,.45);border-radius:2px}

.watermark{position:absolute;left:595px;top:670px;width:170px;pointer-events:none;display:flex;flex-direction:column;align-items:center;color:rgba(120,120,120,.16);line-height:1}
.watermark b{font:700 44px/60px "DejaVu Sans",sans-serif}
.watermark span{font:700 24px/26px "Liberation Sans",sans-serif;color:rgba(210,225,235,.35)}
```
